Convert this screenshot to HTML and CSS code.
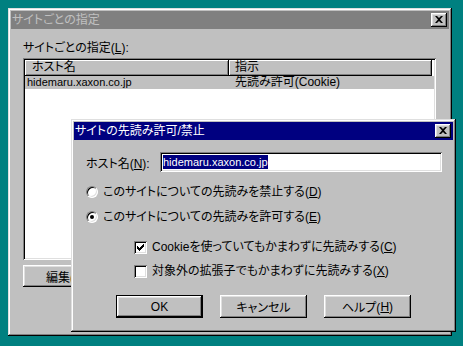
FILE: index.html
```html
<!DOCTYPE html>
<html lang="ja">
<head>
<meta charset="UTF-8">
<title>サイトごとの指定</title>
<link rel="stylesheet" href="styles.css">
</head>
<body>
<div class="window outer">
  <div class="titlebar inactive">
    <span class="title">サイトごとの指定</span>
    <span class="close"><svg width="8" height="7" viewBox="0 0 8 7"><path d="M0 0h2l2 2 2-2h2L5 3.5 8 7H6L4 5 2 7H0l3-3.5z" fill="#000"/></svg></span>
  </div>
  <div class="outer-body">
    <div class="label">サイトごとの指定(<u>L</u>):</div>
    <div class="listbox">
      <div class="list-head">
        <div class="head-cell col1">ホスト名</div>
        <div class="head-cell col2">指示</div>
      </div>
      <div class="list-row">
        <div class="cell col1">hidemaru.xaxon.co.jp</div>
        <div class="cell col2">先読み許可(Cookie)</div>
      </div>
    </div>
    <div class="button edit">編集(<u>E</u>)...</div>
  </div>
</div>

<div class="window dialog">
  <div class="titlebar active">
    <span class="title">サイトの先読み許可/禁止</span>
    <span class="close"><svg width="8" height="7" viewBox="0 0 8 7"><path d="M0 0h2l2 2 2-2h2L5 3.5 8 7H6L4 5 2 7H0l3-3.5z" fill="#000"/></svg></span>
  </div>
  <div class="dialog-body">
    <div class="host-row">
      <span class="host-label">ホスト名(<u>N</u>):</span>
      <div class="textbox"><span class="selected">hidemaru.xaxon.co.jp</span></div>
    </div>
    <div class="option radio-1">
      <span class="radio"></span>
      <span>このサイトについての先読みを禁止する(<u>D</u>)</span>
    </div>
    <div class="option radio-2">
      <span class="radio checked"></span>
      <span>このサイトについての先読みを許可する(<u>E</u>)</span>
    </div>
    <div class="option check check-1">
      <span class="checkbox"><svg width="7" height="7" viewBox="0 0 7 7"><path d="M0 2h1v1h1v1h1V3h1V2h1V1h1V0h1v3H6v1H5v1H4v1H3v1H2V6H1V5H0z" fill="#000"/></svg></span>
      <span>Cookieを使っていてもかまわずに先読みする(<u>C</u>)</span>
    </div>
    <div class="option check check-2">
      <span class="checkbox"></span>
      <span>対象外の拡張子でもかまわずに先読みする(<u>X</u>)</span>
    </div>
    <div class="buttons">
      <div class="button default">OK</div>
      <div class="button">キャンセル</div>
      <div class="button">ヘルプ(<u>H</u>)</div>
    </div>
  </div>
</div>
</body>
</html>
```

FILE: styles.css
```css
body {
  margin: 0;
  width: 463px;
  height: 346px;
  background: #008080;
  font-family: "Liberation Sans", "Noto Sans CJK JP", sans-serif;
  font-size: 12px;
  font-feature-settings: "palt";
  color: #000;
  position: relative;
  overflow: hidden;
}
u {
  text-decoration: underline;
  text-underline-offset: 1px;
}

/* ウィンドウ枠 */
.window {
  position: absolute;
  box-sizing: border-box;
  padding: 3px;
  background: #c0c0c0;
  box-shadow: inset -1px -1px #000, inset 1px 1px #dfdfdf,
              inset -2px -2px #808080, inset 2px 2px #fff;
  display: flex;
  flex-direction: column;
}
.outer {
  left: 8px;
  top: 8px;
  width: 444px;
  height: 328px;
}
.dialog {
  left: 71px;
  top: 119px;
  width: 385px;
  height: 213px;
}

.titlebar {
  height: 18px;
  display: flex;
  align-items: center;
  justify-content: space-between;
  padding: 0 2px 0 1px;
}
.titlebar.inactive {
  background: #808080;
  color: #c0c0c0;
}
.titlebar.active {
  background: #000080;
  color: #fff;
}
.title {
  line-height: 18px;
}
.close {
  width: 16px;
  height: 14px;
  box-sizing: border-box;
  background: #c0c0c0;
  box-shadow: inset -1px -1px #000, inset 1px 1px #fff,
              inset -2px -2px #808080, inset 2px 2px #dfdfdf;
  display: flex;
  align-items: center;
  justify-content: center;
  padding: 0 1px 1px 0;
}
.close svg {
  display: block;
}

/* 親ウィンドウ */
.outer-body {
  padding: 12px 13px 0 12px;
  display: flex;
  flex-direction: column;
  align-items: flex-start;
}
.label {
  line-height: 14px;
}
.listbox {
  margin-top: 3px;
  width: 413px;
  height: 202px;
  box-sizing: border-box;
  background: #fff;
  padding: 2px;
  box-shadow: inset 1px 1px #808080, inset -1px -1px #fff,
              inset 2px 2px #000, inset -2px -2px #dfdfdf;
}
.list-head {
  display: flex;
  height: 16px;
}
.head-cell {
  box-sizing: border-box;
  background: #c0c0c0;
  line-height: 15px;
  padding-left: 7px;
  box-shadow: inset -1px -1px #000, inset 1px 1px #fff,
              inset -2px -2px #808080;
}
.head-cell.col1 {
  width: 204px;
}
.head-cell.col2 {
  width: 203px;
  padding-left: 6px;
}
.list-row {
  display: flex;
  height: 13px;
  background: #c0c0c0;
  line-height: 13px;
}
.cell.col1 {
  width: 208px;
  padding-left: 2px;
  font-size: 11px;
}
.cell.col2 {
  padding-left: 0;
}

.button {
  box-sizing: border-box;
  background: #c0c0c0;
  box-shadow: inset -1px -1px #000, inset 1px 1px #fff,
              inset -2px -2px #808080, inset 2px 2px #dfdfdf;
  display: flex;
  align-items: center;
  justify-content: center;
}
.button.edit {
  margin-top: 5px;
  width: 96px;
  height: 22px;
}

/* ダイアログ */
.dialog-body {
  padding: 12px 11px 0 12px;
  display: flex;
  flex-direction: column;
}
.host-row {
  display: flex;
  align-items: center;
  height: 20px;
}
.host-label {
  width: 74px;
}
.textbox {
  width: 282px;
  height: 20px;
  box-sizing: border-box;
  background: #fff;
  padding: 3px 3px;
  line-height: 14px;
  font-size: 11px;
  box-shadow: inset 1px 1px #808080, inset -1px -1px #fff,
              inset 2px 2px #000, inset -2px -2px #dfdfdf;
}
.selected {
  background: #000080;
  color: #fff;
  padding: 1px 0;
}
.option {
  display: flex;
  align-items: center;
  height: 14px;
  line-height: 14px;
  gap: 5px;
}
.radio-1 {
  margin-top: 13px;
}
.radio-2 {
  margin-top: 11px;
}
.check {
  padding-left: 48px;
  gap: 5px;
}
.check-1 {
  margin-top: 16px;
}
.check-2 {
  margin-top: 10px;
}
.radio {
  width: 12px;
  height: 12px;
  box-sizing: border-box;
  border-radius: 50%;
  background: #fff;
  border: 1px solid;
  border-color: #808080 #fff #fff #808080;
  box-shadow: inset 1px 1px #000, inset -1px -1px #dfdfdf;
  position: relative;
}
.radio.checked::after {
  content: "";
  position: absolute;
  left: 3px;
  top: 3px;
  width: 4px;
  height: 4px;
  border-radius: 50%;
  background: #000;
}
.checkbox {
  width: 13px;
  height: 13px;
  box-sizing: border-box;
  background: #fff;
  box-shadow: inset 1px 1px #808080, inset -1px -1px #fff,
              inset 2px 2px #000, inset -2px -2px #dfdfdf;
  display: flex;
  align-items: center;
  justify-content: center;
}
.checkbox svg {
  display: block;
}
.buttons {
  margin-top: 17px;
  padding-left: 30px;
  display: flex;
  gap: 17px;
}
.buttons .button {
  width: 87px;
  height: 23px;
}
.button.default {
  border: 1px solid #000;
}
```
